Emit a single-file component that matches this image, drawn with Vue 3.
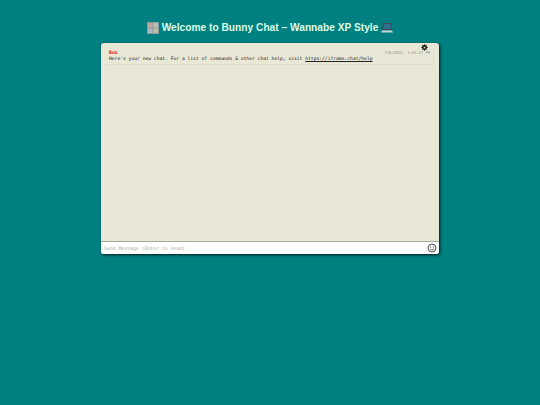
<template>
  <div class="page">
    <h1 class="title">
      <svg class="emoji" viewBox="0 0 12 12">
        <rect x="0" y="0" width="12" height="12" fill="#8d9aa0" />
        <rect x="1" y="1" width="4.5" height="4.5" fill="#c9a596" />
        <rect x="6.5" y="1" width="4.5" height="4.5" fill="#b9c2b4" />
        <rect x="1" y="6.5" width="4.5" height="4.5" fill="#aeb9c4" />
        <rect x="6.5" y="6.5" width="4.5" height="4.5" fill="#c7bd9f" />
      </svg>
      <span>Welcome to Bunny Chat – Wannabe XP Style</span>
      <svg class="emoji" viewBox="0 0 12 12">
        <rect x="1.5" y="1" width="9" height="7" rx="0.5" fill="#3b4a55" />
        <rect x="2.5" y="2" width="7" height="5" fill="#2f6f8f" />
        <path d="M1 8.5h10l1 2H0z" fill="#c9d2d6" />
      </svg>
    </h1>

    <div class="chat">
      <svg class="gear" viewBox="0 0 8 8">
        <circle cx="4" cy="4" r="2.1" fill="none" stroke="#111" stroke-width="1.3" />
        <path d="M4 .3v7.4M.3 4h7.4M1.4 1.4l5.2 5.2M6.6 1.4L1.4 6.6" stroke="#111" stroke-width="1" />
        <circle cx="4" cy="4" r="1" fill="#e9e6d6" />
      </svg>
      <div class="messages">
        <div class="message">
          <div class="meta">
            <span class="author">Bob</span>
            <span class="time">7/0/2025, 1:03:17 PM</span>
          </div>
          <div class="body">Here's your new chat. For a list of commands &amp; other chat help, visit <a href="#">https://iframe.chat/help</a></div>
        </div>
      </div>
      <div class="composer">
        <span class="placeholder">Send Message (Enter to send)</span>
        <svg class="smiley" viewBox="0 0 10 10">
          <circle cx="5" cy="5" r="4" fill="#f4f4f4" stroke="#555" stroke-width="1" />
          <circle cx="3.5" cy="4" r=".6" fill="#444" />
          <circle cx="6.5" cy="4" r=".6" fill="#444" />
          <path d="M3 6.2q2 1.6 4 0" fill="none" stroke="#444" stroke-width=".7" />
        </svg>
      </div>
    </div>
  </div>
</template>

<script setup>
</script>

<style>
html, body {
  margin: 0;
  background: #008080;
}
</style>

<style scoped>
.page {
  width: 540px;
  height: 405px;
  box-sizing: border-box;
  padding-top: 22px;
  background: #008080;
  display: flex;
  flex-direction: column;
  align-items: center;
}

.title {
  margin: 0 0 9px;
  height: 12px;
  display: flex;
  align-items: center;
  gap: 3px;
  font: bold 10.2px/12px "Liberation Sans", sans-serif;
  color: #dcfbe6;
}

.emoji {
  width: 12px;
  height: 12px;
}

.chat {
  position: relative;
  width: 338px;
  height: 211px;
  display: flex;
  flex-direction: column;
  background: #e9e7d6;
  border-radius: 3px;
  overflow: hidden;
  box-shadow: 1px 1px 3px rgba(0, 0, 0, 0.8);
}

.gear {
  position: absolute;
  top: 1px;
  right: 11px;
  width: 7px;
  height: 7px;
}

.messages {
  flex: 1;
  padding: 6px 5px 0 4px;
}

.message {
  padding: 1px 3px 2px 4px;
  border-bottom: 1px solid #e0ddcb;
  border-right: 1px solid #e0ddcb;
  font-family: "DejaVu Sans Mono", monospace;
  font-size: 4.67px;
  line-height: 6px;
  color: #222;
}

.meta {
  display: flex;
  justify-content: space-between;
  height: 6px;
}

.author {
  color: #f02020;
  font-weight: bold;
}

.time {
  color: #8a8a80;
  font-size: 3.8px;
}

.body a {
  color: #222;
  text-decoration: underline;
}

.composer {
  height: 12px;
  display: flex;
  align-items: center;
  justify-content: space-between;
  padding: 0 2px 0 3px;
  background: #fff;
  border-top: 1px solid #a9a89c;
}

.placeholder {
  font-family: "DejaVu Sans Mono", monospace;
  font-size: 4.8px;
  color: #aaa;
}

.smiley {
  width: 10px;
  height: 10px;
}
</style>
